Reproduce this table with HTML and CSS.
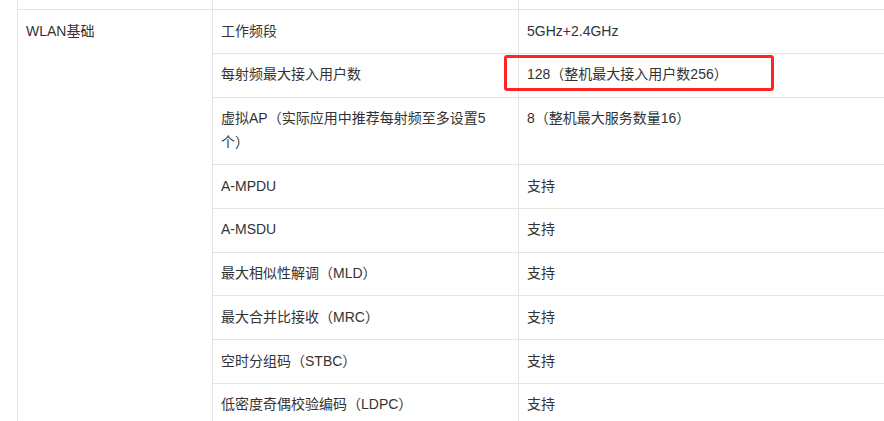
FILE: index.html
```html
<!DOCTYPE html>
<html lang="zh-CN">
<head>
<meta charset="utf-8">
<title>WLAN基础</title>
<link rel="stylesheet" href="styles.css">
</head>
<body>
<div class="page">
  <table class="spec">
    <colgroup>
      <col class="c1">
      <col class="c2">
      <col class="c3">
    </colgroup>
    <tbody>
      <tr class="prev"><td></td><td></td><td></td></tr>
      <tr><td rowspan="9">WLAN基础</td><td>工作频段</td><td>5GHz+2.4GHz</td></tr>
      <tr><td>每射频最大接入用户数</td><td>128（整机最大接入用户数256）</td></tr>
      <tr><td>虚拟AP（实际应用中推荐每射频至多设置5个）</td><td>8（整机最大服务数量16）</td></tr>
      <tr><td>A-MPDU</td><td>支持</td></tr>
      <tr><td>A-MSDU</td><td>支持</td></tr>
      <tr><td>最大相似性解调（MLD）</td><td>支持</td></tr>
      <tr><td>最大合并比接收（MRC）</td><td>支持</td></tr>
      <tr><td>空时分组码（STBC）</td><td>支持</td></tr>
      <tr><td>低密度奇偶校验编码（LDPC）</td><td>支持</td></tr>
    </tbody>
  </table>
  <div class="mark"></div>
</div>
</body>
</html>
```

FILE: styles.css
```css
html, body {
  margin: 0;
  padding: 0;
  background: #ffffff;
  overflow: hidden;
}
.page {
  position: relative;
  padding-left: 17px;
  width: 1100px;
}
.spec {
  border-collapse: collapse;
  table-layout: fixed;
  width: 1001px;
  font-family: "Liberation Sans", "Noto Sans CJK SC", sans-serif;
  font-size: 14px;
  line-height: 23.6px;
  color: #333333;
}
.c1 { width: 195px; }
.c2 { width: 306px; }
.c3 { width: 500px; }
.spec td {
  border: 1px solid #e4e4e4;
  padding: 9.6px 14px 9.6px 8px;
  vertical-align: top;
  text-align: left;
}
.spec tr.prev td {
  border-top: none;
  padding: 0;
  height: 9px;
}
.mark {
  position: absolute;
  left: 504px;
  top: 55px;
  width: 270px;
  height: 36px;
  box-sizing: border-box;
  border: 3px solid #fe2525;
  border-radius: 3px;
}
```
